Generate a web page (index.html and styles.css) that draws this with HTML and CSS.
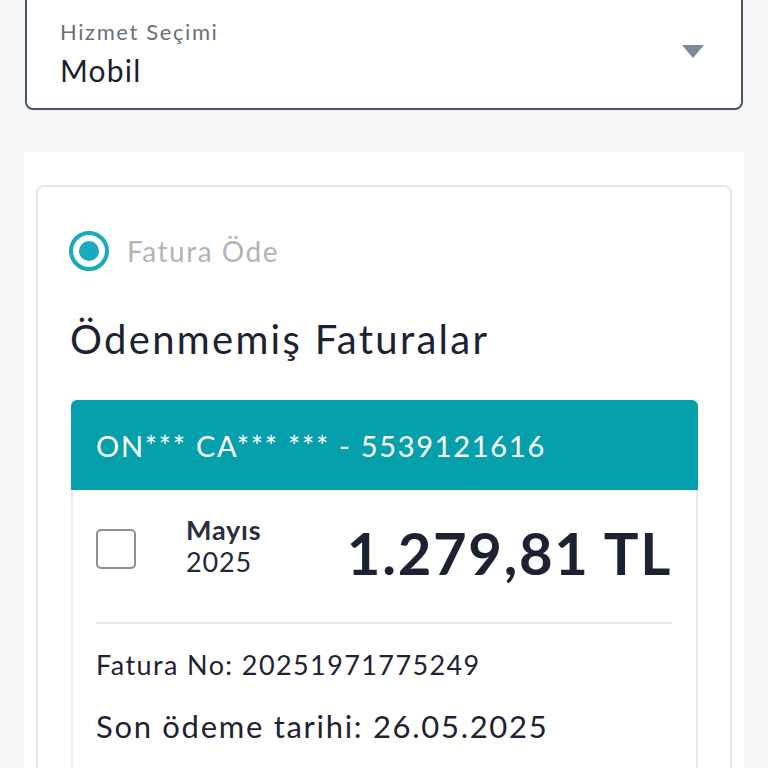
FILE: index.html
```html
<!DOCTYPE html>
<html lang="tr">
<head>
<meta charset="utf-8">
<link rel="stylesheet" href="styles.css">
</head>
<body>
<div class="page">
  <div class="select">
    <div class="select-text">
      <div class="select-label">Hizmet Seçimi</div>
      <div class="select-value">Mobil</div>
    </div>
    <svg class="caret" width="22" height="14" viewBox="0 0 22 14"><path d="M0 0 H22 L11 13 Z" fill="#7d889b"/></svg>
  </div>
  <div class="panel">
    <div class="card">
      <div class="radio-row">
        <span class="radio"><span class="radio-dot"></span></span>
        <span class="radio-label">Fatura Öde</span>
      </div>
      <h2 class="heading">Ödenmemiş Faturalar</h2>
      <div class="bill">
        <div class="bill-head">ON*** CA*** *** - 5539121616</div>
        <div class="bill-body">
          <div class="bill-top">
            <span class="checkbox"></span>
            <div class="period">
              <div class="month">Mayıs</div>
              <div class="year">2025</div>
            </div>
            <div class="amount">1.279,81 TL</div>
          </div>
          <div class="divider"></div>
          <div class="info">Fatura No: 20251971775249</div>
          <div class="due">Son ödeme tarihi: 26.05.2025</div>
        </div>
      </div>
    </div>
  </div>
</div>
</body>
</html>
```
FILE: styles.css
```css
html, body {
  margin: 0;
  padding: 0;
  background: #f5f6f8;
  font-family: "Lato", "Noto Sans", sans-serif;
  color: #1e2232;
}
.page {
  padding: 0 24px;
  height: 768px;
  overflow: hidden;
}
.select {
  margin: -14px 1px 0 1px;
  height: 124px;
  box-sizing: border-box;
  border: 2px solid #4d5360;
  border-radius: 8px;
  background: #fff;
  display: flex;
  align-items: center;
  justify-content: space-between;
  padding: 12px 37px 0 33px;
}
.select-label {
  font-size: 22px;
  letter-spacing: 1.6px;
  color: #6b7079;
  line-height: 28px;
}
.select-value {
  font-size: 30px;
  letter-spacing: 1.2px;
  line-height: 40px;
  color: #1b1f2a;
  margin-top: 4px;
}
.caret {
  margin-top: -4px;
}
.panel {
  margin-top: 42px;
  background: #fff;
  padding: 33px 12px 0 12px;
}
.card {
  border: 2px solid #e4e6eb;
  border-bottom: none;
  border-radius: 8px 8px 0 0;
  padding: 44px 32px 0 31px;
}
.radio-row {
  display: flex;
  align-items: center;
  gap: 18px;
}
.radio {
  width: 40px;
  height: 40px;
  box-sizing: border-box;
  border: 4px solid #1aa9bd;
  border-radius: 50%;
  display: flex;
  align-items: center;
  justify-content: center;
}
.radio-dot {
  width: 20px;
  height: 20px;
  border-radius: 50%;
  background: #1aa9bd;
}
.radio-label {
  font-size: 28px;
  letter-spacing: 1.5px;
  color: #b3b3b3;
}
.heading {
  margin: 43px 0 0 1px;
  font-size: 40px;
  letter-spacing: 2.3px;
  font-weight: 400;
  line-height: 50px;
  color: #1d2233;
}
.bill {
  margin-top: 36px;
  margin-left: 2px;
}
.bill-head {
  background: #06a0ad;
  color: #fff;
  height: 90px;
  border-radius: 6px 6px 0 0;
  display: flex;
  align-items: center;
  padding-left: 25px;
  font-size: 29px;
  letter-spacing: 1.7px;
}
.bill-body {
  border: 2px solid #e8eaed;
  border-top: none;
  padding: 0 24px 60px 23px;
}
.bill-top {
  display: flex;
  align-items: center;
  height: 132px;
}
.checkbox {
  width: 40px;
  height: 40px;
  box-sizing: border-box;
  border: 2px solid #8a8f98;
  border-radius: 5px;
  margin-top: -14px;
}
.period {
  margin-left: 50px;
  font-size: 27px;
  letter-spacing: 0.8px;
  line-height: 32px;
  margin-top: -20px;
}
.month {
  font-weight: 700;
  color: #2a2e3e;
}
.year {
  color: #23273a;
}
.amount {
  margin-left: auto;
  font-size: 58px;
  letter-spacing: 1.7px;
  font-weight: 700;
  color: #1d2233;
  margin-top: -8px;
}
.divider {
  height: 2px;
  background: #e5e7ea;
}
.info {
  margin-top: 24px;
  font-size: 27px;
  letter-spacing: 1.4px;
  line-height: 34px;
}
.due {
  margin-top: 25px;
  font-size: 31px;
  letter-spacing: 1.7px;
  line-height: 38px;
}
```
